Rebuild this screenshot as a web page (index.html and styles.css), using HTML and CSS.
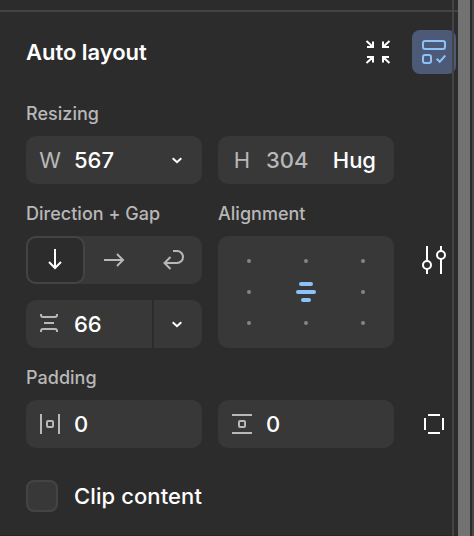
FILE: index.html
```html
<!DOCTYPE html>
<html lang="en">
<head>
<meta charset="utf-8">
<title>Auto layout</title>
<link rel="stylesheet" href="styles.css">
</head>
<body>
<main class="panel">
  <header class="header">
    <h1 class="title">Auto layout</h1>
    <button class="icon-button" aria-label="Collapse">
      <svg width="28" height="28" viewBox="0 0 28 28"><path d="M2.500 3L9 9M9 3.500V9H3M25.500 3L19 9M19 3.500V9h6M2.500 25L9 19M3 19h6v5.500M25.500 25L19 19M25 19h-6v5.500"/></svg>
    </button>
    <button class="icon-button active" aria-label="Auto layout settings">
      <svg width="28" height="28" viewBox="0 0 28 28"><rect x="3" y="3" width="22" height="8" rx="2"/><rect x="3" y="17" width="8" height="8" rx="2"/><path d="M16.700 20.800l3 3 5.600-6.300"/></svg>
    </button>
  </header>

  <h2 class="label first">Resizing</h2>
  <div class="row">
    <div class="field"><span class="prefix">W</span><span class="value">567</span>
      <svg class="chevron" width="14" height="10" viewBox="0 0 14 10"><path d="M2.700 3.200L7 7.200l4.300-4"/></svg>
    </div>
    <div class="field"><span class="prefix">H</span><span class="value muted">304</span><span class="hug">Hug</span></div>
  </div>

  <div class="row">
    <div class="column">
      <h2 class="label">Direction + Gap</h2>
      <div class="segments">
        <button class="segment selected" aria-label="Vertical"><svg width="24" height="24" viewBox="0 0 24 24"><path d="M12 1v19M6 14l6 6 6-6"/></svg></button>
        <button class="segment" aria-label="Horizontal"><svg width="24" height="24" viewBox="0 0 24 24"><path d="M2 12h19M15 6l6 6-6 6"/></svg></button>
        <button class="segment" aria-label="Wrap"><svg width="24" height="24" viewBox="0 0 24 24"><path d="M12 3h4a6 6 0 0 1 0 12H3M9.500 9l-6 6 6 6"/></svg></button>
      </div>
      <div class="gap-field">
        <div class="field"><svg class="prefix" width="22" height="22" viewBox="0 0 22 22"><path d="M3 1v1q0 2 2 2h12q2 0 2-2V1M6 10h10M3 19v-1q0-2 2-2h12q2 0 2 2v1"/></svg><span class="value">66</span></div>
        <div class="field menu"><svg width="14" height="10" viewBox="0 0 14 10"><path d="M2.700 3.200L7 7.200l4.300-4"/></svg></div>
      </div>
    </div>
    <div class="column">
      <h2 class="label">Alignment</h2>
      <div class="alignment">
        <i></i><i></i><i></i><i></i>
        <span class="align-mark"><b class="medium"></b><b class="long"></b><b class="short"></b></span>
        <i></i><i></i><i></i><i></i>
      </div>
    </div>
    <button class="side-icon settings" aria-label="Advanced layout"><svg width="28" height="28" viewBox="0 0 28 28"><path d="M7 0v15M7 23v5M21 0v5M21 13v15"/><circle cx="7" cy="19" r="4"/><circle cx="21" cy="9" r="4"/></svg></button>
  </div>

  <h2 class="label">Padding</h2>
  <div class="row">
    <div class="field"><svg class="prefix" width="22" height="22" viewBox="0 0 22 22"><path d="M3 1v20M21 1v20"/><rect x="9" y="8" width="6" height="6" rx="1"/></svg><span class="value">0</span></div>
    <div class="field"><svg class="prefix" width="22" height="22" viewBox="0 0 22 22"><path d="M2 2h20M2 20h20"/><rect x="9" y="8" width="6" height="6" rx="1"/></svg><span class="value">0</span></div>
    <button class="side-icon" aria-label="Individual padding"><svg width="24" height="24" viewBox="0 0 24 24"><path d="M6 3h12M6 21h12M3 6v12M21 6v12"/></svg></button>
  </div>

  <label class="clip"><span class="checkbox"></span>Clip content</label>
  <div class="rail"></div>
</main>
</body>
</html>
```

FILE: styles.css
```css
* { box-sizing: border-box; }
body {
  margin: 0;
  background: #2c2c2c;
  color: #fff;
  font: 500 22px/28px Inter, sans-serif;
}
.panel {
  position: relative;
  height: 536px;
  padding: 10px 16px 0 26px;
  overflow: hidden;
  background: #2c2c2c;
}
.panel::before {
  content: "";
  position: absolute;
  inset: 10px 0 auto;
  height: 2px;
  background: #444;
}
.panel::after {
  content: "";
  position: absolute;
  inset: auto 0 0;
  height: 1px;
  background: #2a2226;
}
svg { display: block; flex: none; overflow: visible; fill: none; stroke: currentColor; stroke-width: 2; }
button { display: grid; place-items: center; padding: 0; border: 0; background: none; color: #fff; }
.header { display: flex; align-items: center; height: 84px; }
.title { margin: 0 auto 0 0; font-size: 22px; font-weight: 600; letter-spacing: -0.05px; }
.icon-button { flex: none; width: 44px; height: 44px; margin-right: 12px; border-radius: 8px; }
.icon-button.active { margin-right: 2px; background: #4c5977; color: #8cc2f7; }
.label { margin: 0 0 8px; color: #b8b8b8; font-size: 18px; font-weight: 550; line-height: 28px; letter-spacing: 0.02px; }
.label.first { margin-top: 6px; }
.row { display: flex; gap: 16px; margin-bottom: 16px; }
.column { flex: none; width: 176px; }
.field { display: flex; flex: none; align-items: center; width: 176px; height: 48px; padding-left: 12px; border-radius: 10px; background: #383838; }
.prefix { flex: none; width: 24px; margin-right: 12px; color: #b8b8b8; font-weight: 400; text-align: center; }
svg.prefix { width: 22px; margin-right: 14px; }
.muted { color: #b8b8b8; font-weight: 450; }
.chevron { margin: 0 18px 0 auto; }
.hug { margin: 0 18px 0 auto; }
.segments { display: flex; height: 48px; margin-bottom: 16px; border-radius: 10px; background: #383838; }
.segment { flex: none; width: 33.333%; color: #b8b8b8; }
.segment.selected { border: 2px solid #444; border-radius: 10px; background: #2c2c2c; color: #fff; }
.gap-field { display: flex; gap: 2px; }
.gap-field .field { width: 126px; border-radius: 10px 0 0 10px; }
.gap-field .menu { width: 48px; padding: 0 2px 0 0; justify-content: center; border-radius: 0 10px 10px 0; }
.alignment { display: grid; grid-template-columns: repeat(3, 57px); grid-template-rows: repeat(3, 31px); place-items: center; place-content: center; height: 112px; border-radius: 10px; background: #383838; }
.alignment i { width: 4px; height: 4px; border-radius: 50%; background: #858585; }
.align-mark { display: grid; gap: 4px; justify-items: center; }
.align-mark b { height: 4px; border-radius: 2px; background: #8cc2f7; }
.medium { width: 14px; }
.long { width: 20px; }
.short { width: 10px; }
.side-icon { flex: none; width: 48px; height: 48px; }
.settings { margin-top: 36px; }
.clip { display: flex; align-items: center; gap: 16px; margin-top: 32px; letter-spacing: 0.1px; }
.checkbox { width: 32px; height: 32px; border: 2px solid #444; border-radius: 8px; background: #383838; }
.rail {
  position: absolute;
  z-index: 1;
  inset: 0 0 0 auto;
  width: 22px;
  background: linear-gradient(90deg, #444 2px, transparent 2px 6px, #727272 6px 18px, #2c2c2c 18px 20px, #494949 20px);
}
```
